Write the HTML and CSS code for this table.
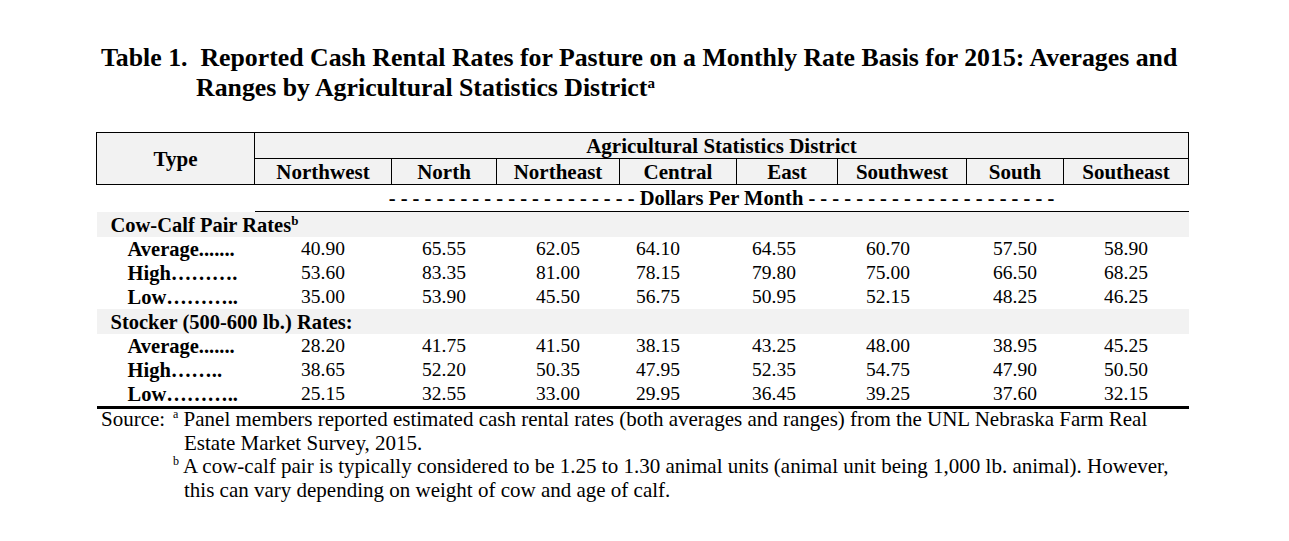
FILE: index.html
```html
<!DOCTYPE html>
<html lang="en">
<head>
<meta charset="utf-8">
<title>Table 1</title>
<link rel="stylesheet" href="styles.css">
</head>
<body>
<div class="page">
  <h1 class="title">Table 1.&nbsp; Reported Cash Rental Rates for Pasture on a Monthly Rate Basis for 2015: Averages and<br>Ranges by Agricultural Statistics District<sup>a</sup></h1>

  <table class="rates">
    <colgroup>
      <col class="c-type"><col class="c-nw"><col class="c-n"><col class="c-ne"><col class="c-c"><col class="c-e"><col class="c-sw"><col class="c-s"><col class="c-se">
    </colgroup>
    <thead>
      <tr class="hrow">
        <th rowspan="2" class="type">Type</th>
        <th colspan="8">Agricultural Statistics District</th>
      </tr>
      <tr class="hrow">
        <th>Northwest</th><th>North</th><th>Northeast</th><th>Central</th><th>East</th><th>Southwest</th><th>South</th><th>Southeast</th>
      </tr>
    </thead>
    <tbody>
      <tr class="unit">
        <td class="blank"></td>
        <td colspan="8" class="unit-cell">- - - - - - - - - - - - - - - - - - - - - Dollars Per Month - - - - - - - - - - - - - - - - - - - - -</td>
      </tr>
      <tr class="group">
        <td colspan="9">Cow-Calf Pair Rates<sup>b</sup></td>
      </tr>
      <tr class="data">
        <td class="lbl">Average.......</td><td>40.90</td><td>65.55</td><td>62.05</td><td class="sc">64.10</td><td class="se">64.55</td><td class="ssw">60.70</td><td>57.50</td><td>58.90</td>
      </tr>
      <tr class="data">
        <td class="lbl">High……….</td><td>53.60</td><td>83.35</td><td>81.00</td><td class="sc">78.15</td><td class="se">79.80</td><td class="ssw">75.00</td><td>66.50</td><td>68.25</td>
      </tr>
      <tr class="data">
        <td class="lbl">Low………..</td><td>35.00</td><td>53.90</td><td>45.50</td><td class="sc">56.75</td><td class="se">50.95</td><td class="ssw">52.15</td><td>48.25</td><td>46.25</td>
      </tr>
      <tr class="group">
        <td colspan="9">Stocker (500-600 lb.) Rates:</td>
      </tr>
      <tr class="data">
        <td class="lbl">Average.......</td><td>28.20</td><td>41.75</td><td>41.50</td><td class="sc">38.15</td><td class="se">43.25</td><td class="ssw">48.00</td><td>38.95</td><td>45.25</td>
      </tr>
      <tr class="data">
        <td class="lbl">High……..</td><td>38.65</td><td>52.20</td><td>50.35</td><td class="sc">47.95</td><td class="se">52.35</td><td class="ssw">54.75</td><td>47.90</td><td>50.50</td>
      </tr>
      <tr class="data last">
        <td class="lbl">Low………..</td><td>25.15</td><td>32.55</td><td>33.00</td><td class="sc">29.95</td><td class="se">36.45</td><td class="ssw">39.25</td><td>37.60</td><td>32.15</td>
      </tr>
    </tbody>
  </table>

  <div class="source">
    <div class="src-label">Source:</div>
    <div class="notes">
      <p class="note"><sup>a</sup> Panel members reported estimated cash rental rates (both averages and ranges) from the UNL Nebraska Farm Real<br>Estate Market Survey, 2015.</p>
      <p class="note"><sup>b</sup> A cow-calf pair is typically considered to be 1.25 to 1.30 animal units (animal unit being 1,000 lb. animal). However,<br>this can vary depending on weight of cow and age of calf.</p>
    </div>
  </div>
</div>
</body>
</html>
```

FILE: styles.css
```css
html, body {
  margin: 0;
  padding: 0;
  background: #ffffff;
}

body {
  font-family: "Liberation Serif", "Times New Roman", serif;
  color: #000000;
}

.page {
  padding: 43px 0 0 96px;
  width: 1092px;
}

.title {
  margin: 0 0 29px 5px;
  font-size: 25.8px;
  font-weight: bold;
  line-height: 30px;
  padding-left: 95px;
  text-indent: -95px;
  width: 1150px;
  white-space: nowrap;
}

.title sup {
  font-size: 15px;
  line-height: 0;
  vertical-align: 8px;
}

.rates {
  border-collapse: collapse;
  table-layout: fixed;
  width: 1092px;
  font-size: 20px;
}

.c-type { width: 158px; }
.c-nw { width: 137px; }
.c-n { width: 105px; }
.c-ne { width: 123px; }
.c-c { width: 117px; }
.c-e { width: 101px; }
.c-sw { width: 129px; }
.c-s { width: 97px; }
.c-se { width: 125px; }

.hrow th {
  background: #f2f2f2;
  border: 1px solid #000000;
  height: 25px;
  padding: 0;
  font-weight: bold;
  font-size: 21px;
  line-height: 24px;
  text-align: center;
  vertical-align: middle;
}

.unit td {
  height: 26px;
  padding: 0;
}

.unit-cell {
  border-bottom: 1px solid #000000;
  text-align: center;
  font-weight: bold;
  font-size: 20.5px;
  line-height: 24px;
  white-space: nowrap;
}

.group td {
  background: #f2f2f2;
  height: 25px;
  padding: 0 0 0 14px;
  font-weight: bold;
  font-size: 20.5px;
  line-height: 24px;
  white-space: nowrap;
}

.group sup {
  font-size: 13px;
  line-height: 0;
  vertical-align: 7px;
}

.data td {
  height: 24px;
  padding: 0;
  text-align: center;
  line-height: 24px;
  font-size: 19.5px;
  white-space: nowrap;
}

.data td.lbl {
  text-align: left;
  padding-left: 31px;
  font-weight: bold;
  font-size: 20.5px;
}

.data td.sc { padding-right: 40px; }
.data td.se { padding-right: 26px; }
.data td.ssw { padding-right: 28px; }

.data.last td {
  border-bottom: 3px solid #000000;
}

.source {
  display: flex;
  margin: -1px 0 0 5px;
  font-size: 21px;
  line-height: 23.5px;
}

.src-label {
  width: 72px;
  flex: none;
}

.notes {
  width: 1020px;
  white-space: nowrap;
}

.note {
  margin: 0;
  padding-left: 11px;
  text-indent: -11px;
}

.note sup {
  font-size: 12px;
  line-height: 0;
  vertical-align: 8px;
}
```
